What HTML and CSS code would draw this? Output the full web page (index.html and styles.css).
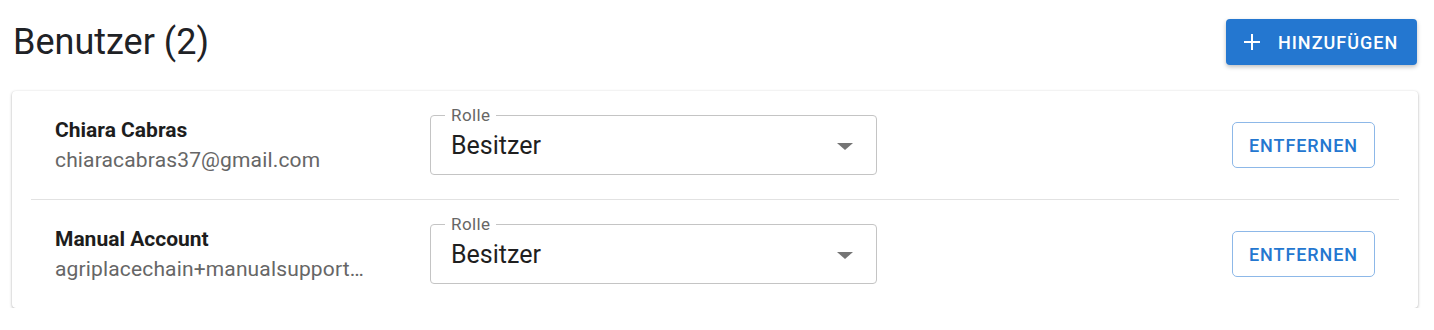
FILE: index.html
```html
<!DOCTYPE html>
<html lang="de">
<head>
    <meta charset="UTF-8">
    <title>Benutzer</title>
    <link rel="stylesheet" href="styles.css">
</head>
<body>
    <div class="page">
        <div class="header">
            <h1>Benutzer (2)</h1>
            <button class="btn-add">
                <svg width="18" height="18" viewBox="0 0 18 18"><path d="M9 1v16M1 9h16" stroke="#fff" stroke-width="2" fill="none"/></svg>
                <span>Hinzufügen</span>
            </button>
        </div>

        <div class="card">
            <div class="user-row">
                <div class="user-info">
                    <div class="user-name">Chiara Cabras</div>
                    <div class="user-email">chiaracabras37@gmail.com</div>
                </div>
                <div class="role-field">
                    <span class="role-label">Rolle</span>
                    <span class="role-value">Besitzer</span>
                    <span class="role-arrow"></span>
                </div>
                <button class="btn-remove">Entfernen</button>
            </div>
            <div class="user-row">
                <div class="user-info">
                    <div class="user-name">Manual Account</div>
                    <div class="user-email">agriplacechain+manualsupport@agriplace.com</div>
                </div>
                <div class="role-field">
                    <span class="role-label">Rolle</span>
                    <span class="role-value">Besitzer</span>
                    <span class="role-arrow"></span>
                </div>
                <button class="btn-remove">Entfernen</button>
            </div>
        </div>
    </div>
</body>
</html>
```

FILE: styles.css
```css
body {
    margin: 0;
    font-family: Roboto, 'Liberation Sans', sans-serif;
    background: #fff;
    color: #222;
}

.page {
    padding: 19px 16px 0 12px;
}

.header {
    display: flex;
    justify-content: space-between;
    align-items: center;
    height: 46px;
    margin-bottom: 26px;
}

h1 {
    margin: 0 0 0 1px;
    font-size: 36px;
    font-weight: 400;
    color: #1f2226;
}

.btn-add {
    display: flex;
    align-items: center;
    gap: 17px;
    height: 46px;
    width: 191px;
    margin-right: 1px;
    padding: 0 17px;
    border: none;
    border-radius: 4px;
    background: #2477d0;
    color: #fff;
    font-family: inherit;
    font-size: 18px;
    font-weight: 500;
    letter-spacing: 1px;
    text-transform: uppercase;
    box-shadow: 0 2px 4px rgba(0,0,0,0.25);
}

.card {
    border-radius: 4px;
    background: #fff;
    box-shadow: 0 1px 3px rgba(0,0,0,0.3), 0 0 1px rgba(0,0,0,0.08);
}

.user-row {
    display: flex;
    align-items: center;
    height: 108px;
    margin: 0 19px;
    padding: 0 24px;
}

.user-row + .user-row {
    border-top: 1px solid #e2e2e2;
}

.user-info {
    flex: 0 0 315px;
    margin-right: 60px;
    overflow: hidden;
}

.user-name {
    font-size: 21px;
    font-weight: 700;
    color: #1d1d1d;
    line-height: 30px;
}

.user-email {
    font-size: 21px;
    letter-spacing: 0.15px;
    color: #666;
    line-height: 30px;
    white-space: nowrap;
    overflow: hidden;
    text-overflow: ellipsis;
}

.role-field {
    position: relative;
    box-sizing: border-box;
    width: 447px;
    height: 60px;
    border: 1px solid #c4c4c4;
    border-radius: 4px;
    display: flex;
    align-items: center;
    padding: 0 20px;
}

.role-label {
    position: absolute;
    top: -11px;
    left: 14px;
    padding: 0 6px;
    background: #fff;
    font-size: 17px;
    letter-spacing: 0.4px;
    color: #666;
    line-height: 20px;
}

.role-value {
    font-size: 25px;
    line-height: 30px;
    color: #1f1f1f;
    padding-top: 1px;
}

.role-arrow {
    position: absolute;
    right: 23px;
    top: 27px;
    width: 0;
    height: 0;
    border-left: 8px solid transparent;
    border-right: 8px solid transparent;
    border-top: 7px solid #757575;
}

.btn-remove {
    margin-left: auto;
    height: 46px;
    width: 143px;
    padding: 0;
    border: 1px solid #8db8e8;
    border-radius: 5px;
    background: #fff;
    color: #2477d0;
    font-family: inherit;
    font-size: 18px;
    font-weight: 500;
    letter-spacing: 0.9px;
    text-transform: uppercase;
}
```
